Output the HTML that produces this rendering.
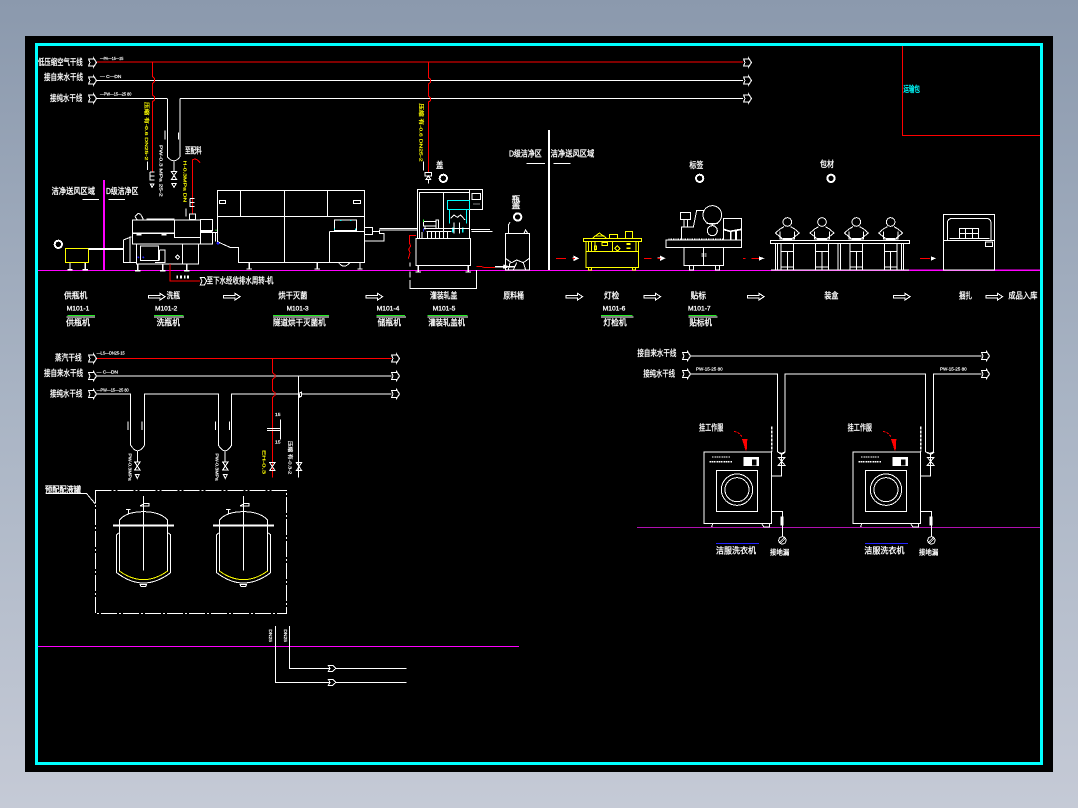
<!DOCTYPE html>
<html><head><meta charset="utf-8"><style>
html,body{margin:0;padding:0;width:1078px;height:808px;overflow:hidden;background:linear-gradient(#8b99ad 0,#a9b4c4 50%,#c5cad6 100%)}
svg{position:absolute;left:0;top:0;display:block}
text{font-family:"Liberation Sans","Noto Sans CJK SC",sans-serif;fill:#fff;stroke:#fff;stroke-width:.9px;font-size:25px}
.t{font-size:15px;stroke-width:.6px}
.y{fill:#ff0;stroke:#ff0;stroke-width:.6px;font-size:15px}
g.z{fill:none;stroke:#fff;stroke-width:3}
</style></head><body>
<svg width="1078" height="808" viewBox="0 0 1078 808" shape-rendering="crispEdges">
<defs>
<g id="ra"><path d="M0 -3.5H5V-4.5L8 0L5 4.5V3.5H0L1.5 0Z" fill="#000" stroke="#fff" stroke-width="1"/></g>
<g id="arrow"><path d="M0 -4H35V-10L50 0L35 10V4H0Z" fill="none" stroke="#fff" stroke-width="3"/></g>
<g id="leg"><path d="M0 0V18M-8 20H8" stroke="#fff" stroke-width="4" fill="none"/></g>
<g id="valve"><path d="M-8 -12H8L-8 12H8Z" fill="none" stroke="#fff" stroke-width="3"/></g>
<g id="circ"><circle r="11" fill="none" stroke="#fff" stroke-width="6"/></g>
<g id="worker" fill="none" stroke="#fff" stroke-width="3">
<circle cx="0" cy="-109" r="13"/>
<path d="M-10 -95L-22 -88L-36 -76L-16 -60M10 -95L22 -88L36 -76L16 -60M-22 -80V-58H22V-80M-13 -60H13V-55H-13Z"/>
<path d="M-19 -44H19V35H-19ZM0 -20V35M-19 -20H19M-19 26H19"/>
</g>
<g id="vessel" fill="none" stroke="#fff" stroke-width="3">
<path d="M268 557V540Q290 515 340 515Q390 515 413 540V557"/>
<path d="M249 557H432" stroke-width="6"/>
<path d="M268 557V693M413 557V693"/>
<path d="M268 693Q340 745 413 693" stroke="#ff0"/>
<path d="M268 578L260 584V698Q340 760 422 698V584L413 578"/>
<path d="M340 468V692M288 508H302M295 508V522M330 497L345 490H357V498H330"/>
<path d="M330 733H350L347 740H333Z"/>
</g>
<g id="washer" fill="none" stroke="#fff" stroke-width="3">
<rect x="222" y="336" width="203" height="215"/>
<rect x="259" y="391" width="124" height="124"/>
<circle cx="321" cy="449" r="47"/><circle cx="321" cy="449" r="36"/>
<rect x="340" y="351" width="47" height="27" fill="#fff" stroke="none"/>
<rect x="366" y="358" width="14" height="18" fill="#000" stroke="none"/>
<path d="M246 351H300M238 365H308" stroke-dasharray="5 2" stroke-width="4"/>
<path d="M248 551L245 561M395 551L402 561H418V551"/>
<path d="M446 336Q455 348 465 336M455 343V408H425M445 352H465L445 376H465Z"/>
<path d="M425 514H457V530"/>
<rect x="452" y="530" width="8" height="26" fill="#fff" stroke="none"/>
<path d="M457 556V590"/>
<circle cx="457" cy="601" r="11"/>
<path d="M449 606L462 593M452 609L465 596" stroke-width="2"/>
<path d="M425 260V335" stroke-dasharray="8 4" stroke-width="5"/>
<path d="M258 611H387" stroke="#22f"/>
<path d="M312 274Q330 278 335 290" stroke="#f00" stroke-dasharray="8 3"/>
<path d="M336 297H352L350 332H347Z" fill="#f00" stroke="none"/>
</g>
</defs>

<rect x="25" y="36" width="1028" height="736" fill="#000"/>
<rect x="36.5" y="44.5" width="1005" height="719" fill="none" stroke="#00ffff" stroke-width="3"/>

<!-- mains -->
<path d="M97 62H743" stroke="#f00" stroke-width="1"/>
<path d="M97 80.5H743M97 98.5H167M180 98.5H743" stroke="#fff" stroke-width="1"/>
<path d="M38 270.5H1040" stroke="#f0f" stroke-width="1"/>
<path d="M38 646.5H519" stroke="#f0f" stroke-width="1"/>
<path d="M637 527.5H1040" stroke="#b010b0" stroke-width="1"/>
<use href="#ra" x="88.5" y="62.5"/><use href="#ra" x="88.5" y="80.5"/><use href="#ra" x="88.5" y="98.5"/>
<use href="#ra" x="743.5" y="62.5"/><use href="#ra" x="743.5" y="80.5"/><use href="#ra" x="743.5" y="98.5"/>

<!-- ZOOM 1 -->
<g class="z" transform="translate(30 40) scale(.33333)">
<text x="24" y="75" textLength="134" lengthAdjust="spacingAndGlyphs">低压缩空气干线</text>
<text x="42" y="120" textLength="117" lengthAdjust="spacingAndGlyphs">接自来水干线</text>
<text x="60" y="183" textLength="97" lengthAdjust="spacingAndGlyphs">接纯水干线</text>
<text class="t" x="210" y="60" textLength="70" lengthAdjust="spacingAndGlyphs">—PA—15—25</text>
<text class="t" x="210" y="114" textLength="64" lengthAdjust="spacingAndGlyphs">— C—DN</text>
<text class="t" x="210" y="167" textLength="94" lengthAdjust="spacingAndGlyphs">—PW—15—25 80</text>
<path d="M367 66V110L374 115V125L367 130V165L374 170V180L367 185V398" stroke="#f00" stroke-width="3"/>
<path d="M360 396H373M360 396V420H373M360 408H373" />
<path d="M361 432H372L366 442Z"/>
<path d="M352 365V390"/>
<text class="y" transform="translate(345 186) rotate(90)" textLength="175" lengthAdjust="spacingAndGlyphs">压缩 有-0.6 DN25-2</text>
<text class="t" transform="translate(389 315) rotate(90)" textLength="155" lengthAdjust="spacingAndGlyphs">PW-0.3 MPa 25-2</text>
<path d="M412 175V350Q432 375 450 350V175"/>
<path d="M405 272V298M445 278V298M432 365V395"/>
<use href="#valve" x="432" y="407"/>
<path d="M425 430H439L432 442Z"/>
<text x="465" y="340" textLength="50" lengthAdjust="spacingAndGlyphs">至配料</text>
<text class="y" transform="translate(461 362) rotate(90)" textLength="125" lengthAdjust="spacingAndGlyphs">H-0.3MPa DN</text>
<path d="M487 522V360Q498 352 510 368" stroke="#f00"/>
<path d="M480 475H494M480 475V499H494M480 487H494"/>
<path d="M468 505V530M478 522H497V538H478Z"/>
<text x="65" y="462" textLength="130" lengthAdjust="spacingAndGlyphs">洁净送风区域</text>
<path d="M157 478H207M235 478H285"/>
<text x="228" y="462" textLength="97" lengthAdjust="spacingAndGlyphs">D级洁净区</text>
<path d="M222 420V690" stroke="#f0f" stroke-width="5"/>
<circle cx="85" cy="613" r="11" stroke-width="6"/>
<rect x="106" y="625" width="70" height="43" stroke="#ff0"/>
<use href="#leg" x="120" y="669"/><use href="#leg" x="166" y="669"/>
<path d="M176 627H280" stroke-width="5"/>
<!-- filler -->
<rect x="307" y="540" width="205" height="72"/>
<path d="M307 580H433" stroke-width="5"/>
<rect x="433" y="540" width="79" height="52"/>
<rect x="512" y="538" width="36" height="34"/><rect x="512" y="578" width="36" height="34"/>
<path d="M512 575H548" stroke-width="5"/>
<path d="M350 538H433" stroke-width="4"/>
<path d="M320 583H335M395 583H410" stroke-width="8"/>
<path d="M320 612V672H505V612M457 612V672"/>
<rect x="332" y="618" width="53" height="44"/>
<path d="M388 630H405V668H375M388 630V662"/>
<path d="M305 590L280 600V668H320M300 590V668"/>
<use href="#leg" x="323" y="672"/><use href="#leg" x="398" y="672"/><use href="#leg" x="470" y="672"/>
<path d="M315 530L325 520L332 523L340 538M315 530L322 540"/>
<circle cx="325" cy="652" r="3" fill="#22f" stroke="none"/><circle cx="340" cy="652" r="3" fill="#22f" stroke="none"/>
<path d="M443 645L449 651L443 658L437 651Z" stroke="#fff"/>
<path d="M420 672V723H510" stroke="#f00"/>
<path d="M442 707V716M453 707V716M464 707V716M474 707V716" stroke-width="5"/>
<path d="M511 712H523L530 723L523 735H511L516 723Z"/>
<text x="530" y="730" textLength="200" lengthAdjust="spacingAndGlyphs">至下水经收排水周转-机</text>
<!-- tunnel -->
<path d="M562 451H1003V529H562ZM631 451V529M763 451V667M892 451V529"/>
<rect x="568" y="481" width="19" height="10"/><rect x="970" y="481" width="22" height="10"/>
<path d="M562 529V605L600 622H625V667H1003V529M898 574V667M898 574H1003"/>
<path d="M913 540H980V572H913Z"/>
<path d="M930 541H935M960 541H965M914 565V570M977 565V570" stroke="#0ff"/>
<use href="#leg" x="658" y="667"/><use href="#leg" x="862" y="667"/><use href="#leg" x="990" y="667"/>
<path d="M925 667Q942 690 960 667"/>
<path d="M548 578H562M556 578V605"/>
<circle cx="558" cy="571" r="2" fill="#2f2" stroke="none"/>
<circle cx="564" cy="610" r="4" fill="#22f" stroke="none"/>
<!-- labels row -->
<text x="102" y="776" textLength="70" lengthAdjust="spacingAndGlyphs">供瓶机</text>
<use href="#arrow" x="355" y="770"/>
<text x="410" y="776" textLength="40" lengthAdjust="spacingAndGlyphs">洗瓶</text>
<use href="#arrow" x="580" y="770"/>
<text x="745" y="776" textLength="87" lengthAdjust="spacingAndGlyphs">烘干灭菌</text>
<text style="font-size:20px" x="110" y="811" textLength="68" lengthAdjust="spacingAndGlyphs">M101-1</text>
<text style="font-size:20px" x="375" y="811" textLength="67" lengthAdjust="spacingAndGlyphs">M101-2</text>
<text style="font-size:20px" x="770" y="811" textLength="66" lengthAdjust="spacingAndGlyphs">M101-3</text>
<path d="M112 827H195M372 827H460M729 827H897" stroke="#2e2"/>
<path d="M110 831H195M372 831H462M729 831H897"/>
<text x="108" y="856" textLength="72" lengthAdjust="spacingAndGlyphs">供瓶机</text>
<text x="380" y="856" textLength="70" lengthAdjust="spacingAndGlyphs">洗瓶机</text>
<text x="729" y="856" textLength="158" lengthAdjust="spacingAndGlyphs">隧道烘干灭菌机</text>
</g>

<!-- ZOOM 2 -->
<g class="z" transform="translate(360 40) scale(.33333)">
<path d="M205 66V112L212 118V127L205 132V168L212 174V182L205 186V396" stroke="#f00"/>
<path d="M195 397H215V408H195ZM205 408L198 418H212ZM205 418V430"/>
<path d="M190 365V392"/>
<text class="y" transform="translate(178 190) rotate(90)" textLength="175" lengthAdjust="spacingAndGlyphs">压缩 有-0.6 DN25-2</text>
<text x="228" y="384" textLength="22" lengthAdjust="spacingAndGlyphs">盖</text>
<use href="#circ" x="250" y="415"/>
<!-- conveyor right of tunnel -->
<rect x="14" y="562" width="24" height="22"/>
<path d="M14 603H72V580H58V570H172M38 574H58M58 566H172M335 574H398M333 568H390"/>
<!-- capper -->
<path d="M172 596V448H368V508H328M178 596V458H328V596M250 458V596"/>
<rect x="328" y="448" width="40" height="60"/>
<rect x="336" y="460" width="26" height="18"/>
<path d="M340 492H360" stroke-dasharray="4 2" stroke-width="4"/>
<rect x="262" y="481" width="66" height="28" stroke="#0ff"/>
<path d="M268 509V550M320 509V550" stroke="#0ff"/>
<path d="M278 562V578M308 562V578" stroke="#0ff" stroke-width="5"/>
<path d="M272 535L282 525L292 532L302 525L315 540M282 548V580M298 548V580"/>
<path d="M190 545H228V558H190ZM228 540H235V565H228ZM195 558V568"/>
<path d="M190 538V546" stroke="#2e2"/><path d="M190 565V575" stroke="#22f"/>
<path d="M192 566H330M200 574H275M186 576V596M202 576V596M214 576V596M226 576V596M238 576V596M250 576V596M262 576V596"/>
<rect x="168" y="596" width="164" height="80"/>
<use href="#leg" x="175" y="676"/><use href="#leg" x="325" y="676"/>
<path d="M168 586H148V608L152 618L146 628L150 638L145 656" stroke="#f00"/>
<path d="M150 668V680M150 695V712M150 720V745H350V690" />
<path d="M350 680H365L375 683H405" stroke="#f00"/>
<path d="M405 680H465M430 675L445 680L430 685" stroke-width="4"/>
<!-- tank -->
<rect x="436" y="580" width="72" height="110"/>
<path d="M445 580V555L450 547M492 580L497 570L503 580"/>
<path d="M436 655L455 668L470 660L490 668L508 655M450 668L445 690M490 668L497 690M460 690L470 668"/>
<use href="#circ" x="473" y="531"/>
<text transform="translate(455 484)" style="font-size:22px" textLength="26" lengthAdjust="spacingAndGlyphs">瓶</text>
<text transform="translate(455 505)" style="font-size:22px" textLength="26" lengthAdjust="spacingAndGlyphs">盖</text>
<!-- divider -->
<path d="M567 270V690" stroke-width="5"/>
<text x="447" y="350" textLength="98" lengthAdjust="spacingAndGlyphs">D级洁净区</text>
<text x="572" y="350" textLength="131" lengthAdjust="spacingAndGlyphs">洁净送风区域</text>
<path d="M500 370H555M580 370H632"/>
<path d="M588 655H618M852 655H875" stroke="#f00"/>
<path d="M637 655H653M892 655H912M643 650L653 655L643 660ZM902 650L912 655L902 660Z" stroke-width="4"/>
<path d="M637 655H645M892 655H902" stroke="#f00"/>
<!-- yellow machine -->
<g stroke="#ff0">
<rect x="670" y="595" width="175" height="9"/>
<rect x="678" y="605" width="157" height="78"/>
<path d="M678 635H835M705 605V635M757 605V635M828 605V635M685 605V635M694 605V635"/>
<path d="M697 595L718 579L740 595M704 588H733"/>
<rect x="748" y="583" width="25" height="12"/><rect x="796" y="574" width="22" height="21"/>
<rect x="726" y="607" width="17" height="10"/>
<rect x="703" y="618" width="7" height="11"/>
<path d="M772 617L780 625L772 633L764 625Z"/>
<path d="M800 612H812M800 625H812" stroke-width="5"/>
<path d="M686 683V690H695V683M817 683V690H826V683"/>
</g>
<!-- labels -->
<use href="#arrow" x="18" y="770"/>
<text x="210" y="776" textLength="82" lengthAdjust="spacingAndGlyphs">灌装轧盖</text>
<text x="430" y="776" textLength="62" lengthAdjust="spacingAndGlyphs">原料桶</text>
<use href="#arrow" x="618" y="770"/>
<text x="732" y="776" textLength="46" lengthAdjust="spacingAndGlyphs">灯检</text>
<use href="#arrow" x="852" y="770"/>
<text x="992" y="776" textLength="46" lengthAdjust="spacingAndGlyphs">贴标</text>
<text style="font-size:20px" x="50" y="811" textLength="68" lengthAdjust="spacingAndGlyphs">M101-4</text>
<text style="font-size:20px" x="218" y="811" textLength="68" lengthAdjust="spacingAndGlyphs">M101-5</text>
<text style="font-size:20px" x="728" y="811" textLength="68" lengthAdjust="spacingAndGlyphs">M101-6</text>
<text style="font-size:20px" x="984" y="811" textLength="68" lengthAdjust="spacingAndGlyphs">M101-7</text>
<path d="M50 827H135M202 827H322M723 827H818M985 827H1070" stroke="#2e2"/>
<path d="M50 831H138M202 831H324M723 831H820M985 831H1072"/>
<text x="53" y="856" textLength="70" lengthAdjust="spacingAndGlyphs">储瓶机</text>
<text x="205" y="856" textLength="110" lengthAdjust="spacingAndGlyphs">灌装轧盖机</text>
<text x="730" y="856" textLength="70" lengthAdjust="spacingAndGlyphs">灯检机</text>
<text x="988" y="856" textLength="68" lengthAdjust="spacingAndGlyphs">贴标机</text>
<text x="988" y="384" textLength="42" lengthAdjust="spacingAndGlyphs">标签</text>
<use href="#circ" x="1019" y="415"/>
<!-- labeler -->
<rect x="918" y="600" width="227" height="23"/>
<rect x="972" y="623" width="118" height="54"/>
<path d="M1031 623V677"/>
<path d="M1024 642H1029M1034 642H1039M1024 648H1029M1034 648H1039" stroke-width="4"/>
<path d="M988 677V690H1000V677M1067 677V690H1079V677"/>
<rect x="961" y="517" width="31" height="22"/>
<path d="M972 539V560M982 539V560M964 600V561H1000L1010 512H1030"/>
<circle cx="1057" cy="525" r="28"/>
<circle cx="1057" cy="572" r="15"/>
<path d="M1040 551H1074"/>
<rect x="1090" y="535" width="55" height="65"/>
<path d="M925 598H1090" stroke-dasharray="4 3" stroke-width="5"/>
<path d="M1090 568L1110 574L1145 568M1112 574V598M1128 572V598" stroke-width="5"/>
</g>

<!-- ZOOM 3 -->
<g class="z" transform="translate(700 40) scale(.33333)">
<path d="M607 18V286H1020" stroke="#f00"/>
<text x="610" y="156" textLength="50" lengthAdjust="spacingAndGlyphs" style="fill:#0ff;stroke:#0ff">运输包</text>
<text x="360" y="381" textLength="42" lengthAdjust="spacingAndGlyphs">包材</text>
<use href="#circ" x="393" y="415"/>
<path d="M129 655H137M155 655H178M660 655H690" stroke="#f00"/>
<path d="M178 651L189 655L178 660ZM694 651L704 655L694 660Z" fill="#fff"/>
<!-- table -->
<rect x="211" y="601" width="418" height="10"/>
<path d="M213 690H627"/>
<path d="M226 611V690M232 611V690M414 611V690M421 611V690M604 611V690M611 611V690" />
<use href="#worker" x="262" y="655"/><use href="#worker" x="366" y="655"/><use href="#worker" x="469" y="655"/><use href="#worker" x="572" y="655"/>
<path d="M627 690H730M884 690H1020" stroke="#f0f"/>
<!-- packer -->
<rect x="730" y="523" width="154" height="167"/>
<path d="M730 601H884M742 601V550Q742 535 758 535H858Q873 535 873 550V601M748 596H868"/>
<path d="M778 565H836V595H778ZM797 565V595M817 565V595M778 580H836"/>
<rect x="856" y="606" width="22" height="14"/>
<use href="#arrow" x="142" y="770"/>
<text x="373" y="776" textLength="42" lengthAdjust="spacingAndGlyphs">装盒</text>
<use href="#arrow" x="580" y="770"/>
<text x="777" y="776" textLength="39" lengthAdjust="spacingAndGlyphs">捆扎</text>
<use href="#arrow" x="858" y="770"/>
<text x="925" y="775" textLength="87" lengthAdjust="spacingAndGlyphs">成品入库</text>
</g>

<!-- ZOOM 4 -->
<g class="z" transform="translate(30 340) scale(.33333)">
<path d="M200 55H1085" stroke="#f00"/>
<path d="M200 108H1085M200 162H302V315Q322 350 344 315V162H565V315Q585 350 605 315V162H803L815 156V168L808 172V162M815 162H1085"/>
<g transform="scale(3)"><use href="#ra" x="58.5" y="18.5"/><use href="#ra" x="58.5" y="36"/><use href="#ra" x="58.5" y="54"/><use href="#ra" x="361.5" y="18.5"/><use href="#ra" x="361.5" y="36"/><use href="#ra" x="361.5" y="54"/></g>
<text x="75" y="62" textLength="80" lengthAdjust="spacingAndGlyphs">蒸汽干线</text>
<text x="42" y="108" textLength="117" lengthAdjust="spacingAndGlyphs">接自来水干线</text>
<text x="60" y="170" textLength="97" lengthAdjust="spacingAndGlyphs">接纯水干线</text>
<text class="t" x="200" y="44" textLength="84" lengthAdjust="spacingAndGlyphs">—LS—DN25-15</text>
<text class="t" x="200" y="101" textLength="64" lengthAdjust="spacingAndGlyphs">— C—DN</text>
<text class="t" x="200" y="155" textLength="96" lengthAdjust="spacingAndGlyphs">—PW—15—25 80</text>
<path d="M294 245V270M336 245V270M556 245V270M598 245V270"/>
<path d="M727 55V98L735 104V112L727 118V152L735 158V166L727 172V412" stroke="#f00"/>
<path d="M805 108V412"/>
<path d="M711 265H750M711 272H750M751 238V298"/>
<text class="t" x="735" y="228">15</text>
<text class="t" x="735" y="310">15</text>
<text class="y" transform="translate(698 330) rotate(90)" textLength="72" lengthAdjust="spacingAndGlyphs">EH-0.3</text>
<text class="t" transform="translate(775 303) rotate(90)" textLength="100" lengthAdjust="spacingAndGlyphs">压缩 有-0.3-2</text>
<use href="#valve" x="727" y="380"/><use href="#valve" x="807" y="380"/>
<text class="t" transform="translate(295 340) rotate(90)" textLength="82" lengthAdjust="spacingAndGlyphs">PW-0.3MPa</text>
<text class="t" transform="translate(557 340) rotate(90)" textLength="82" lengthAdjust="spacingAndGlyphs">PW-0.3MPa</text>
<path d="M322 335V365M585 335V365"/>
<use href="#valve" x="322" y="378"/><use href="#valve" x="586" y="378"/>
<path d="M316 403H328L322 415ZM580 403H592L586 415Z"/>
<text x="45" y="457" textLength="108" lengthAdjust="spacingAndGlyphs">预配配液罐</text>
<path d="M48 461H170L196 492"/>
<path d="M196 451H770V820H196Z" stroke-dasharray="48 6 6 6"/>
<use href="#vessel"/>
<use href="#vessel" x="300"/>
<path d="M736 858V1027H1130M778 858V985H1130"/>
<path d="M895 976H908L918 985L908 994H895L900 985Z" fill="#000"/>
<path d="M895 1018H908L918 1027L908 1036H895L900 1027Z" fill="#000"/>
<text class="t" transform="translate(717 868) rotate(90)" textLength="38" lengthAdjust="spacingAndGlyphs">DN25</text>
<text class="t" transform="translate(762 868) rotate(90)" textLength="38" lengthAdjust="spacingAndGlyphs">DN25</text>
</g>

<!-- ZOOM 5 -->
<g class="z" transform="translate(630 340) scale(.33333)">
<path d="M180 48H1055M180 102H443V335Q453 345 465 335V102H887V335Q898 345 910 335V102H1055"/>
<g transform="scale(3)"><use href="#ra" x="52.5" y="16"/><use href="#ra" x="52.5" y="34"/><use href="#ra" x="351.5" y="16"/><use href="#ra" x="351.5" y="34"/></g>
<text x="22" y="48" textLength="117" lengthAdjust="spacingAndGlyphs">接自来水干线</text>
<text x="40" y="110" textLength="95" lengthAdjust="spacingAndGlyphs">接纯水干线</text>
<text class="t" x="198" y="92" textLength="80" lengthAdjust="spacingAndGlyphs">PW-15-25 80</text>
<text class="t" x="930" y="92" textLength="80" lengthAdjust="spacingAndGlyphs">PW-15-25 80</text>
<use href="#washer"/>
<use href="#washer" x="447"/>
<text x="207" y="271" textLength="73" lengthAdjust="spacingAndGlyphs">挂工作服</text>
<text x="653" y="271" textLength="73" lengthAdjust="spacingAndGlyphs">挂工作服</text>
<text x="258" y="640" textLength="120" lengthAdjust="spacingAndGlyphs">洁服洗衣机</text>
<text x="703" y="640" textLength="120" lengthAdjust="spacingAndGlyphs">洁服洗衣机</text>
<text style="font-size:20px" x="420" y="643" textLength="58" lengthAdjust="spacingAndGlyphs">接地漏</text>
<text style="font-size:20px" x="867" y="643" textLength="58" lengthAdjust="spacingAndGlyphs">接地漏</text>
</g>
</svg>
</body></html>
